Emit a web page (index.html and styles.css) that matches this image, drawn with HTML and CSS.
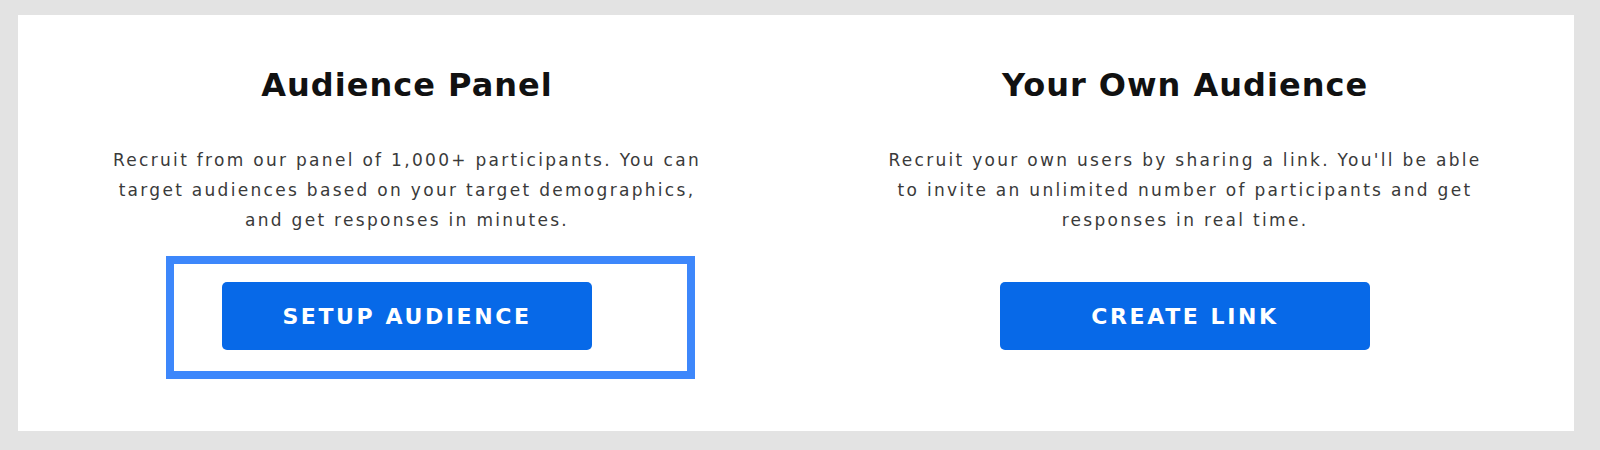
FILE: index.html
```html
<!DOCTYPE html>
<html lang="en">
  <head>
    <meta charset="UTF-8" />
    <title>Choose audience</title>
    <link rel="stylesheet" href="styles.css">
  </head>
  <body>
    <!-- two ways to recruit participants -->
    <div class="card">
      <div class="option">
        <h2 class="option-title">Audience Panel</h2>
        <p class="option-text">
          Recruit from our panel of 1,000+ participants. You can<br>
          target audiences based on your target demographics,<br>
          and get responses in minutes.
        </p>
        <div class="btn-wrap focused">
          <a href="javascript:;" class="btn">Setup Audience</a>
        </div>
      </div>
      <div class="option">
        <h2 class="option-title">Your Own Audience</h2>
        <p class="option-text">
          Recruit your own users by sharing a link. You'll be able<br>
          to invite an unlimited number of participants and get<br>
          responses in real time.
        </p>
        <div class="btn-wrap">
          <a href="javascript:;" class="btn">Create Link</a>
        </div>
      </div>
    </div>
  </body>
</html>
```
FILE: styles.css
```css
* {
  margin: 0;
  padding: 0;
  box-sizing: border-box;
}
body {
  background-color: #e3e3e3;
  padding: 15px 26px 19px 18px;
  font-family: "DejaVu Sans", "Open Sans", sans-serif;
}
/* white card with two columns */
.card {
  background-color: #fff;
  height: 416px;
  display: grid;
  grid-template-columns: 1fr 1fr;
}
.option {
  display: flex;
  flex-direction: column;
  align-items: center;
  padding-top: 50px;
}
.option-title {
  font-size: 32px;
  font-weight: 600;
  line-height: 40px;
  color: #111;
  letter-spacing: 1px;
}
.option-text {
  margin-top: 40px;
  font-size: 17px;
  line-height: 30px;
  color: #3a3a3a;
  text-align: center;
  letter-spacing: 2.3px;
}
.btn-wrap {
  position: relative;
  margin-top: 47px;
}
/* focus ring round the first button */
.btn-wrap.focused::after {
  content: "";
  position: absolute;
  top: -26px;
  right: -103px;
  bottom: -29px;
  left: -56px;
  border: 8px solid #3d87fb;
}
.btn {
  display: flex;
  align-items: center;
  justify-content: center;
  width: 370px;
  height: 68px;
  background-color: #0769e8;
  border-radius: 5px;
  color: #fff;
  text-decoration: none;
  text-transform: uppercase;
  font-size: 22px;
  font-weight: 700;
  letter-spacing: 2.6px;
}
```
